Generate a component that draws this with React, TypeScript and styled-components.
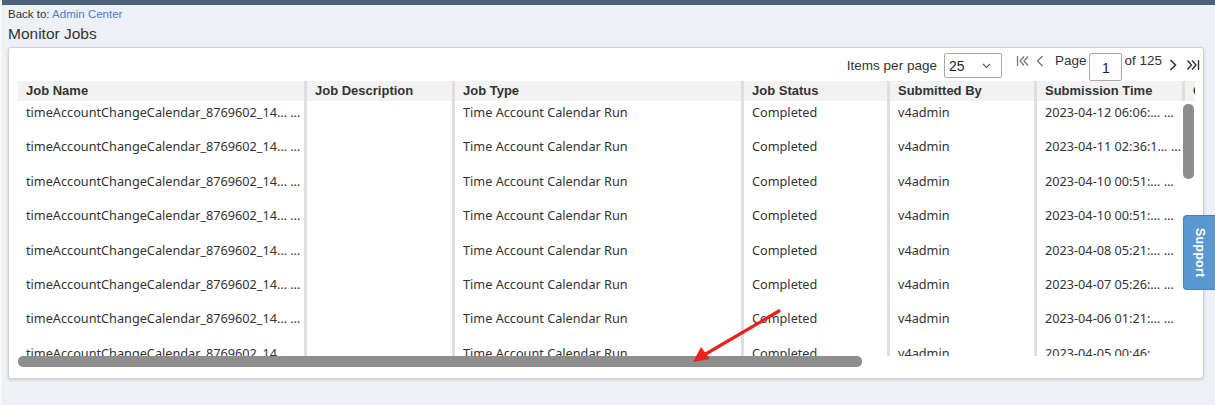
import React from "react";
import styled, { createGlobalStyle } from "styled-components";

const Global = createGlobalStyle`
  html, body { margin: 0; padding: 0; }
  body {
    background: #edf1f5;
    font-family: "Liberation Sans", Arial, sans-serif;
    color: #333;
    width: 1215px;
    height: 405px;
    overflow: hidden;
  }
`;

const Page = styled.div`
  position: relative;
  width: 1215px;
  height: 405px;
  border-left: 2px solid #f7f8fa;
  box-sizing: border-box;
`;

const TopBar = styled.div`
  height: 5px;
  background: #4c6379;
`;

const Crumb = styled.div`
  padding: 3px 0 0 6px;
  font-size: 11.5px;
  line-height: 13px;
  color: #333;
  a { color: #4a7fc4; text-decoration: none; }
`;

const Title = styled.h1`
  margin: 4px 0 0 6px;
  font-size: 15.5px;
  font-weight: normal;
  line-height: 18px;
  color: #333;
`;

const Card = styled.div`
  margin: 4px 0 0 6px;
  width: 1196px;
  height: 332px;
  box-sizing: border-box;
  background: #fff;
  border: 1px solid #cfd3d7;
  border-radius: 3px;
  box-shadow: 0 1px 3px rgba(0,0,0,0.18);
  padding: 0 9px 10px 9px;
  display: flex;
  flex-direction: column;
`;

const Toolbar = styled.div`
  height: 33px;
  display: flex;
  justify-content: flex-end;
  align-items: flex-start;
  margin-right: -6px;
  font-size: 13.5px;
  color: #333;
`;

const Label = styled.span`
  margin-top: 10px;
  margin-right: 7px;
`;

const Select = styled.div`
  margin-top: 5px;
  width: 58px;
  height: 25px;
  box-sizing: border-box;
  border: 1px solid #a9a9a9;
  border-radius: 2px;
  display: flex;
  align-items: center;
  justify-content: space-between;
  padding: 0 10px 0 4px;
  font-size: 14px;
  color: #222;
`;

const Pager = styled.div`
  display: flex;
  align-items: flex-start;
  margin-left: 14px;
`;

const PagerIcon = styled.span<{ $top: number; $ml: number }>`
  display: inline-flex;
  margin-top: ${(p) => p.$top}px;
  margin-left: ${(p) => p.$ml}px;
`;

const PagerText = styled.span<{ $ml: number }>`
  margin-top: 5px;
  margin-left: ${(p) => p.$ml}px;
  font-size: 13.5px;
`;

const PageInput = styled.div`
  margin-top: 5px;
  margin-left: 3px;
  width: 33px;
  height: 28px;
  box-sizing: border-box;
  border: 1px solid #a9a9a9;
  border-radius: 2px;
  display: flex;
  align-items: flex-end;
  justify-content: center;
  padding-bottom: 4px;
  font-size: 14px;
  color: #222;
`;

const Grid = styled.div`
  display: flex;
  flex-direction: column;
  width: 1177px;
`;

const HeaderRow = styled.div`
  display: flex;
  height: 20px;
  background: #f2f2f2;
  overflow: hidden;
  white-space: nowrap;
`;

const HeadCell = styled.div<{ $w: number }>`
  flex: 0 0 ${(p) => p.$w}px;
  box-sizing: border-box;
  padding: 2px 0 0 8px;
  border-right: 3px solid #dedede;
  font-weight: bold;
  font-size: 13px;
  line-height: 16px;
  color: #333;
  overflow: hidden;
  &:last-child { border-right: none; }
`;

const BodyWrap = styled.div`
  display: flex;
  height: 255px;
`;

const Viewport = styled.div`
  flex: 0 0 1164px;
  overflow: hidden;
`;

const Row = styled.div`
  display: flex;
  height: 34.4px;
  white-space: nowrap;
`;

const Cell = styled.div<{ $w: number }>`
  flex: 0 0 ${(p) => p.$w}px;
  box-sizing: border-box;
  padding: 3px 0 0 8px;
  border-right: 3px solid #dedede;
  font-family: "Noto Sans", "Open Sans", sans-serif;
  font-size: 12.7px;
  line-height: 16px;
  color: #333;
  overflow: hidden;
  &:last-child { border-right: none; }
`;

const VScroll = styled.div`
  flex: 0 0 13px;
  background: #fff;
`;

const VThumb = styled.div`
  margin: 3px 0 0 1px;
  width: 11px;
  height: 75px;
  border-radius: 5px;
  background: #8e8e8e;
`;

const HScroll = styled.div`
  height: 12px;
`;

const HThumb = styled.div`
  width: 844px;
  height: 11px;
  border-radius: 5px;
  background: #8e8e8e;
`;

const Support = styled.div`
  position: absolute;
  right: 0;
  top: 215px;
  width: 32px;
  height: 75px;
  box-sizing: border-box;
  background: #5b97d1;
  border: 1px solid #4782be;
  border-right: none;
  border-radius: 4px 0 0 4px;
  display: flex;
  align-items: center;
  justify-content: center;
  color: #fff;
  font-weight: bold;
  font-size: 12.5px;
  writing-mode: vertical-rl;
  letter-spacing: 0.2px;
`;

const Arrow = styled.svg`
  position: absolute;
  left: 680px;
  top: 300px;
  pointer-events: none;
`;

const widths = [289, 148, 289, 146, 147, 148, 40];
const headers = ["Job Name", "Job Description", "Job Type", "Job Status", "Submitted By", "Submission Time", "Comments"];
const times = [
  "2023-04-12 06:06:… …",
  "2023-04-11 02:36:1… …",
  "2023-04-10 00:51:… …",
  "2023-04-10 00:51:… …",
  "2023-04-08 05:21:… …",
  "2023-04-07 05:26:… …",
  "2023-04-06 01:21:… …",
  "2023-04-05 00:46:… …",
];

const FirstIcon = () => (
  <svg width="14" height="12" viewBox="0 0 14 12" fill="none" stroke="#777" strokeWidth="1.3">
    <path d="M1.5 1v10" />
    <path d="M8 1.5 L4 6 L8 10.5" />
    <path d="M12 1.5 L8 6 L12 10.5" />
  </svg>
);
const PrevIcon = () => (
  <svg width="8" height="12" viewBox="0 0 8 12" fill="none" stroke="#777" strokeWidth="1.4">
    <path d="M6.5 1 L1.5 6 L6.5 11" />
  </svg>
);
const NextIcon = () => (
  <svg width="8" height="12" viewBox="0 0 8 12" fill="none" stroke="#333" strokeWidth="1.6">
    <path d="M1.5 1 L6.5 6 L1.5 11" />
  </svg>
);
const LastIcon = () => (
  <svg width="14" height="12" viewBox="0 0 14 12" fill="none" stroke="#333" strokeWidth="1.4">
    <path d="M1.5 1.5 L5.5 6 L1.5 10.5" />
    <path d="M6 1.5 L10 6 L6 10.5" />
    <path d="M12.5 1v10" />
  </svg>
);
const Chevron = () => (
  <svg width="9" height="6" viewBox="0 0 9 6" fill="none" stroke="#555" strokeWidth="1.1">
    <path d="M1 1 L4.5 4.5 L8 1" />
  </svg>
);

export default function App() {
  return (
    <>
      <Global />
      <Page>
        <TopBar />
        <Crumb>
          Back to: <a href="#">Admin Center</a>
        </Crumb>
        <Title>Monitor Jobs</Title>
        <Card>
          <Toolbar>
            <Label>Items per page</Label>
            <Select>
              <span>25</span>
              <Chevron />
            </Select>
            <Pager>
              <PagerIcon $top={7} $ml={0}><FirstIcon /></PagerIcon>
              <PagerIcon $top={7} $ml={6}><PrevIcon /></PagerIcon>
              <PagerText $ml={11}>Page</PagerText>
              <PageInput>1</PageInput>
              <PagerText $ml={2}>of 125</PagerText>
              <PagerIcon $top={11} $ml={7}><NextIcon /></PagerIcon>
              <PagerIcon $top={11} $ml={9}><LastIcon /></PagerIcon>
            </Pager>
          </Toolbar>
          <Grid>
            <HeaderRow>
              {headers.map((h, i) => (
                <HeadCell key={h} $w={widths[i]}>{h}</HeadCell>
              ))}
            </HeaderRow>
            <BodyWrap>
              <Viewport>
                {times.map((t, i) => (
                  <Row key={i}>
                    <Cell $w={widths[0]}>timeAccountChangeCalendar_8769602_14… …</Cell>
                    <Cell $w={widths[1]}></Cell>
                    <Cell $w={widths[2]}>Time Account Calendar Run</Cell>
                    <Cell $w={widths[3]}>Completed</Cell>
                    <Cell $w={widths[4]}>v4admin</Cell>
                    <Cell $w={widths[5]}>{t}</Cell>
                  </Row>
                ))}
              </Viewport>
              <VScroll>
                <VThumb />
              </VScroll>
            </BodyWrap>
            <HScroll>
              <HThumb />
            </HScroll>
          </Grid>
        </Card>
        <Support>Support</Support>
        <Arrow width="110" height="70" viewBox="0 0 110 70">
          <path d="M97 11 L22 55" stroke="#e8231b" strokeWidth="3.2" strokeLinecap="round" />
          <path d="M11 62 L19 47 L28 59 Z" fill="#e8231b" />
        </Arrow>
      </Page>
    </>
  );
}
